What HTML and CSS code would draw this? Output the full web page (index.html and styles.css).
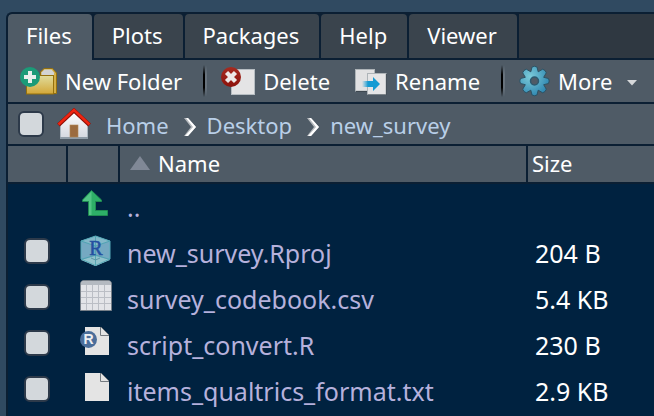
FILE: index.html
```html
<!DOCTYPE html>
<html lang="en">
<head>
<meta charset="utf-8">
<title>Files</title>
<link rel="stylesheet" href="styles.css">
</head>
<body>
<main class="pane">
  <nav class="tabs" role="tablist">
    <button class="tab active" role="tab" aria-selected="true">Files</button>
    <button class="tab" role="tab">Plots</button>
    <button class="tab" role="tab">Packages</button>
    <button class="tab" role="tab">Help</button>
    <button class="tab" role="tab">Viewer</button>
    <span class="tab-fill"></span>
  </nav>

  <div class="toolbar" role="toolbar">
    <button class="tool">
      <svg width="37" height="28" viewBox="0 0 37 28" aria-hidden="true">
        <defs><linearGradient id="gold" x2="0" y2="1"><stop offset="0" stop-color="#e0dc9c"/><stop offset="1" stop-color="#d3a738"/></linearGradient></defs>
        <path d="M20.500 8V5L24 1.500H32.500L36.500 6V26.500H20.500Z" fill="#d3ae45" stroke="#94700d"/>
        <path d="M21.500 7V5.500L24.500 2.500H31.500L34 5.500V25H21.500Z" fill="#d2d3d2"/>
        <rect x="6.500" y="8.500" width="27" height="18.500" fill="url(#gold)" stroke="#94700d"/>
        <circle cx="10" cy="10" r="10" fill="#1b9b78"/>
        <path d="M10 4V16M4 10H16" stroke="#e8eeeb" stroke-width="4"/>
      </svg>
      <span>New Folder</span>
    </button>
    <span class="separator"></span>
    <button class="tool">
      <svg width="34" height="28" viewBox="0 0 34 28" aria-hidden="true">
        <defs><linearGradient id="red" x2="0" y2="1"><stop offset="0" stop-color="#a62b20"/><stop offset="1" stop-color="#8d120b"/></linearGradient></defs>
        <rect x="10.500" y="2.500" width="23" height="25" fill="#e4e4e5" stroke="#b6bdc2"/>
        <circle cx="10" cy="10" r="10" fill="url(#red)"/>
        <path d="M5.500 5.500L14.500 14.500M14.500 5.500L5.500 14.500" stroke="#eee8e6" stroke-width="4.400"/>
      </svg>
      <span>Delete</span>
    </button>
    <button class="tool">
      <svg width="32" height="28" viewBox="0 0 32 28" aria-hidden="true">
        <defs><linearGradient id="blue"><stop offset="0" stop-color="#149bd3" stop-opacity="0"/><stop offset=".35" stop-color="#149bd3"/></linearGradient></defs>
        <rect x=".5" y="2.500" width="19" height="21.500" fill="#e1e1e2" stroke="#aeb4b8"/>
        <path d="M1 24.500H13" stroke="#3e4850"/>
        <rect x="12.500" y="6.500" width="18.500" height="21" fill="#e5e5e6" stroke="#aeb4b8"/>
        <path d="M12.500 28H31.500V7" fill="none" stroke="#48525b"/>
        <path d="M7 14H18V10L25 17L18 24V20H7Z" fill="url(#blue)"/>
      </svg>
      <span>Rename</span>
    </button>
    <span class="separator"></span>
    <button class="tool">
      <svg width="31" height="32" viewBox="-15.500 -16 31 32" aria-hidden="true">
        <defs>
          <radialGradient id="teal" cx=".35" cy=".35" r=".7"><stop offset="0" stop-color="#7ccbd9"/><stop offset="1" stop-color="#2e86b0"/></radialGradient>
        </defs>
        <path fill="url(#teal)" stroke="#2c5264" stroke-width="1" stroke-linejoin="round" d="M-3.700 -9.200L-2.500 -14Q0 -15.500 2.500 -14L3.700 -9.200L8.200 -11.800Q11 -11 11.800 -8.200L9.200 -3.700L14 -2.500Q15.500 0 14 2.500L9.200 3.700L11.800 8.200Q11 11 8.200 11.800L3.700 9.200L2.500 14Q0 15.500 -2.500 14L-3.700 9.200L-8.200 11.800Q-11 11 -11.800 8.200L-9.200 3.700L-14 2.500Q-15.500 0 -14 -2.500L-9.200 -3.700L-11.800 -8.200Q-11 -11 -8.200 -11.800Z"/>
        <circle r="4" fill="#4f5b66" stroke="#2c5a70" stroke-width="1.500"/>
      </svg>
      <span>More</span>
      <svg class="caret" width="12" height="6" viewBox="0 0 12 6" aria-hidden="true"><path d="M1 0H11L6 5.500Z" fill="#d6d8da"/></svg>
    </button>
  </div>

  <div class="path">
    <input class="check" type="checkbox" aria-label="Select all files">
    <a class="home" href="#" aria-label="Home folder">
      <svg width="34" height="32" viewBox="0 0 34 32" aria-hidden="true">
        <defs><linearGradient id="wall" x2="0" y2="1"><stop offset="0" stop-color="#fff"/><stop offset="1" stop-color="#d4d8e0"/></linearGradient></defs>
        <path d="M3.500 15L17 3L30.500 15V30H3.500Z" fill="url(#wall)"/>
        <path d="M3.500 16V30H30.500V16" fill="none" stroke="#aab6c0"/>
        <path d="M3 30H31" stroke="#8f9ca7" stroke-width="2"/>
        <rect x="13" y="17" width="8" height="12" fill="#9b6b3f" stroke="#b38655" stroke-width=".6"/>
        <path d="M1.500 17L17 2.500L32.500 17" fill="none" stroke="#8d1008" stroke-width="4"/>
        <path d="M1.500 16.500L17 2L32.500 16.500" fill="none" stroke="#ee2511" stroke-width="2.400"/>
      </svg>
    </a>
    <a class="crumb" href="#">Home</a>
    <svg class="chevron" width="12" height="18" viewBox="0 0 12 18" aria-hidden="true"><path d="M0 0H4L12 9L4 18H0L7 9Z" fill="#b5b9bd"/><path d="M2 0H4L12 9L4 18H1L9 9Z" fill="#fff"/></svg>
    <a class="crumb" href="#">Desktop</a>
    <svg class="chevron" width="12" height="18" viewBox="0 0 12 18" aria-hidden="true"><path d="M0 0H4L12 9L4 18H0L7 9Z" fill="#b5b9bd"/><path d="M2 0H4L12 9L4 18H1L9 9Z" fill="#fff"/></svg>
    <a class="crumb" href="#">new_survey</a>
  </div>

  <table class="files">
    <colgroup><col class="col-check"><col class="col-icon"><col><col class="col-size"></colgroup>
    <thead>
      <tr>
        <th></th>
        <th></th>
        <th class="by-name"><svg class="sort" width="20" height="14" viewBox="0 0 20 14" aria-hidden="true"><path d="M10 0L20 14H0Z" fill="#808896"/></svg>Name</th>
        <th>Size</th>
      </tr>
    </thead>
    <tbody>
      <tr>
        <td></td>
        <td class="icon">
          <svg width="32" height="32" viewBox="0 0 32 32" aria-hidden="true">
            <path d="M11.500 2.500L21.500 12V13.500H15.500V22.500H27.500V27.500H8.500V13.500H2.500V12Z" fill="#2eaf68" stroke="#1f8b51"/>
            <path d="M11.500 3.500V27H9V13H3V12Z" fill="#52c585"/>
          </svg>
        </td>
        <td><a class="file" href="#">..</a></td>
        <td></td>
      </tr>
      <tr>
        <td class="select"><input class="check" type="checkbox" aria-label="Select new_survey.Rproj"></td>
        <td class="icon">
          <svg width="32" height="32" viewBox="0 0 32 32" aria-hidden="true">
            <path d="M15.500 2L30 7V25L15.500 32L1 25V7Z" fill="#75a9c2"/>
            <path d="M15.500 2L30 7L15.500 12L1 7Z" fill="#83b8c9"/>
            <path d="M15.500 22L30 26L15.500 32L1 26Z" fill="#91c3cc"/>
            <path d="M15.500 12V22M1 7L15.500 12L30 7M1 25.500L15.500 21L30 25.500M15.500 2V12M15.500 21V32" fill="none" stroke="#45a0ad" stroke-width=".8"/>
            <path d="M15.500 2L30 7V25L15.500 31.500L1 25V7Z" fill="none" stroke="#57aab8"/>
            <path d="M11 24L15.500 26L20 24" fill="none" stroke="#6095a5"/>
            <text class="cube-letter" x="16" y="21" text-anchor="middle">R</text>
          </svg>
        </td>
        <td><a class="file" href="#">new_survey.Rproj</a></td>
        <td class="size">204 B</td>
      </tr>
      <tr>
        <td class="select"><input class="check" type="checkbox" aria-label="Select survey_codebook.csv"></td>
        <td class="icon">
          <svg width="32" height="32" viewBox="0 0 32 32" aria-hidden="true">
            <path d="M.5 30.500V4Q.5 .5 4 .5H28Q31.500 .5 31.500 4V30.500Z" fill="#e3e4e8" stroke="#777f88"/>
            <path d="M1 5V4Q1 1 4 1H28Q31 1 31 4V5Z" fill="#b5bac1"/>
            <path d="M1 11.500H31M1 17.500H31M1 23.500H31M6.500 5V30M12.500 5V30M18.500 5V30M24.500 5V30" stroke="#bbbec5"/>
          </svg>
        </td>
        <td><a class="file" href="#">survey_codebook.csv</a></td>
        <td class="size">5.4 KB</td>
      </tr>
      <tr>
        <td class="select"><input class="check" type="checkbox" aria-label="Select script_convert.R"></td>
        <td class="icon">
          <svg width="32" height="32" viewBox="0 0 32 32" aria-hidden="true">
            <path d="M5 1H21L29 9V29H5Z" fill="#e4e4e4"/>
            <path d="M20.500 1V9.500H29M21 1L29 9" fill="none" stroke="#747a80"/>
            <circle cx="8.500" cy="13.500" r="8.500" fill="#4b6e9b"/>
            <text class="badge-letter" x="8.500" y="18" text-anchor="middle">R</text>
          </svg>
        </td>
        <td><a class="file" href="#">script_convert.R</a></td>
        <td class="size">230 B</td>
      </tr>
      <tr>
        <td class="select"><input class="check" type="checkbox" aria-label="Select items_qualtrics_format.txt"></td>
        <td class="icon">
          <svg width="32" height="32" viewBox="0 0 32 32" aria-hidden="true">
            <path d="M5 1H21L29 9V29H5Z" fill="#e4e4e4"/>
            <path d="M20.500 1V9.500H29M21 1L29 9" fill="none" stroke="#747a80"/>
          </svg>
        </td>
        <td><a class="file" href="#">items_qualtrics_format.txt</a></td>
        <td class="size">2.9 KB</td>
      </tr>
    </tbody>
  </table>
</main>
</body>
</html>
```
FILE: styles.css
```css
:root {
  --line: #0b1f33;
  --bar: #4f5b66;
}

* {
  box-sizing: border-box;
}

body {
  margin: 0;
  min-height: 100vh;
  display: flex;
  background: #304a61;
  color: #fff;
  font: 22px/30px "Lucida Grande", "Noto Sans", sans-serif;
}

button {
  border: 0;
  padding: 0;
  background: none;
  color: inherit;
  font: inherit;
}

a {
  text-decoration: none;
}

svg {
  display: block;
  flex: none;
}

.pane {
  flex: 1;
  min-width: 0;
  margin: 12px 0 0 6px;
  border: solid var(--line);
  border-width: 2px 0 0 2px;
  border-top-left-radius: 6px;
  background: #002240;
  overflow: hidden;
}

.tabs {
  display: flex;
  height: 46px;
  background: var(--line);
  gap: 2px;
}

.tab {
  margin-bottom: 2px;
  padding: 0 20px 2px 18px;
  border-radius: 4px 4px 0 0;
  background: #3a444d;
}

.tab.active {
  margin-bottom: 0;
  padding-bottom: 4px;
  background: var(--bar);
}

.tab-fill {
  flex: 1;
  margin-bottom: 2px;
  background: #2f3841;
}

.toolbar {
  display: flex;
  align-items: center;
  height: 44px;
  padding-left: 12px;
  border-bottom: 2px solid var(--line);
  background: var(--bar);
}

.tool {
  display: flex;
  align-items: center;
  gap: 8px;
  white-space: nowrap;
}

.tool + .tool {
  margin-left: 25px;
}

.separator {
  width: 4px;
  height: 32px;
  margin: 0 14px 0 21px;
  background: linear-gradient(90deg, #000 0 2px, #68737d 2px);
  mask-image: linear-gradient(transparent, #000 30%, #000 70%, transparent);
}

.caret {
  margin: 4px 0 0 6px;
}

.path {
  display: flex;
  align-items: center;
  height: 42px;
  padding-left: 10px;
  border-bottom: 2px solid var(--line);
  background: var(--bar);
}

.check {
  appearance: none;
  display: block;
  width: 26px;
  height: 26px;
  margin: 0;
  border: 2px solid #2d3a4a;
  border-radius: 6px;
  background: #d3d8dc;
}

.home {
  margin: 0 15px 0 13px;
}

.crumb {
  padding-top: 2px;
  color: #b9cfe8;
}

.chevron {
  margin: 5px 11px 0 15px;
}

.files {
  width: 100%;
  border-collapse: collapse;
  table-layout: fixed;
}

.col-check {
  width: 60px;
}

.col-icon {
  width: 52px;
}

.col-size {
  width: 126px;
}

th {
  height: 38px;
  padding: 0 4px 4px;
  background: var(--bar);
  box-shadow: inset -2px -2px var(--line);
  font-weight: 400;
  text-align: left;
}

th:last-child {
  box-shadow: inset 0 -2px var(--line);
}

.by-name {
  padding-left: 10px;
}

.sort {
  display: inline-block;
  margin-right: 8px;
  vertical-align: 2px;
}

td {
  height: 46px;
  padding: 0 0 0 7px;
  font-size: 25px;
  line-height: 46px;
  vertical-align: top;
}

td.select {
  padding: 8px 0 0 16px;
}

td.icon {
  padding: 4px 0 0 12px;
}

.file {
  color: #b6b1dc;
}

.cube-letter {
  font: 400 20px "Liberation Serif", serif;
  fill: #2450a0;
  stroke: #2450a0;
  stroke-width: .5px;
}

.badge-letter {
  font: 700 14px "Liberation Sans", sans-serif;
  fill: #eef0f3;
}
```
